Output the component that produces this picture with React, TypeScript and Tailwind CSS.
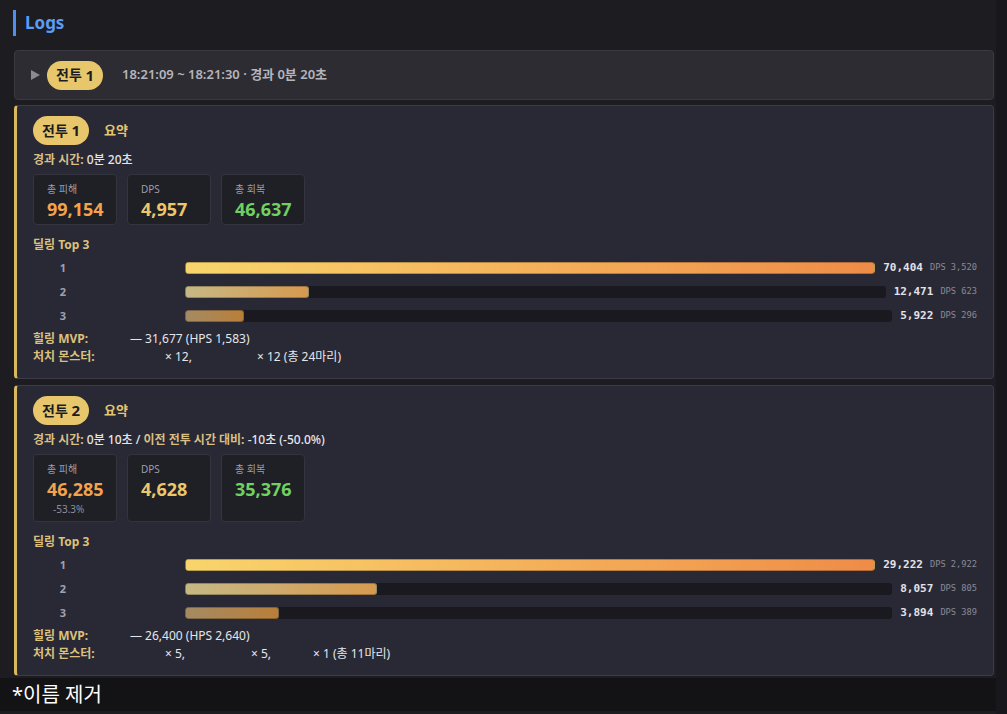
import React from 'react';

const KR = { fontFamily: '"Noto Sans", "Noto Sans CJK KR", sans-serif' };
const MONO = { fontFamily: '"DejaVu Sans Mono", "Liberation Mono", monospace' };

type Stat = { label: string; value: string; color: string; sub?: string };
type Rank = { pct: number; value: string; dps: string; grad: string };

interface Fight {
  no: number;
  timeLine: React.ReactNode;
  stats: Stat[];
  ranks: Rank[];
  mvp: string;
  monsters: { text: string; w?: string }[];
}

const grads = [
  'bg-gradient-to-r from-[#f8d56c] to-[#ee8c48]',
  'bg-gradient-to-r from-[#c6b884] to-[#d69a4f]',
  'bg-gradient-to-r from-[#a48a62] to-[#b97f38]',
];

const fights: Fight[] = [
  {
    no: 1,
    timeLine: (
      <>
        <span className="font-bold text-[#d8bf84]">경과 시간:</span>{' '}
        <span className="font-medium text-[#e6e6ea]">0분 20초</span>
      </>
    ),
    stats: [
      { label: '총 피해', value: '99,154', color: 'text-[#f4a24c]' },
      { label: 'DPS', value: '4,957', color: 'text-[#ecc76a]' },
      { label: '총 회복', value: '46,637', color: 'text-[#6fd160]' },
    ],
    ranks: [
      { pct: 100, value: '70,404', dps: '3,520', grad: grads[0] },
      { pct: 17.7, value: '12,471', dps: '623', grad: grads[1] },
      { pct: 8.4, value: '5,922', dps: '296', grad: grads[2] },
    ],
    mvp: '— 31,677 (HPS 1,583)',
    monsters: [{ text: '× 12,', w: 'w-[92px]' }, { text: '× 12 (총 24마리)' }],
  },
  {
    no: 2,
    timeLine: (
      <>
        <span className="font-bold text-[#d8bf84]">경과 시간:</span>{' '}
        <span className="font-medium text-[#e6e6ea]">0분 10초 / </span>
        <span className="font-bold text-[#d8bf84]">이전 전투 시간 대비:</span>{' '}
        <span className="font-medium text-[#e6e6ea]">-10초 (-50.0%)</span>
      </>
    ),
    stats: [
      { label: '총 피해', value: '46,285', color: 'text-[#f4a24c]', sub: '-53.3%' },
      { label: 'DPS', value: '4,628', color: 'text-[#ecc76a]' },
      { label: '총 회복', value: '35,376', color: 'text-[#6fd160]' },
    ],
    ranks: [
      { pct: 100, value: '29,222', dps: '2,922', grad: grads[0] },
      { pct: 27.2, value: '8,057', dps: '805', grad: grads[1] },
      { pct: 13.3, value: '3,894', dps: '389', grad: grads[2] },
    ],
    mvp: '— 26,400 (HPS 2,640)',
    monsters: [
      { text: '× 5,', w: 'w-[86px]' },
      { text: '× 5,', w: 'w-[62px]' },
      { text: '× 1 (총 11마리)' },
    ],
  },
];

const Pill = ({ no }: { no: number }) => (
  <span className="inline-flex items-center h-[29px] px-[9px] rounded-full bg-[#e8c76c] text-[#1d1c20] text-[14px] font-bold leading-none">
    전투&nbsp;<span className="text-[15px]">{no}</span>
  </span>
);

const FightCard = ({ f }: { f: Fight }) => (
  <div className="bg-[#292935] border border-[#3b3b49] border-l-[3px] border-l-[#d9b960] rounded-[4px] pl-[16px] pr-[16px] pt-[10px] pb-[12px]">
    <div className="flex items-center gap-[15px]">
      <Pill no={f.no} />
      <span className="text-[13px] font-bold text-[#e7c66f]">요약</span>
    </div>
    <div className="mt-[7px] text-[12px] leading-[16px]">{f.timeLine}</div>
    <div className="mt-[6px] flex gap-[10px]">
      {f.stats.map((s) => (
        <div
          key={s.label}
          className="w-[84px] bg-[#1f1f26] border border-[#34343e] rounded-[4px] pl-[13px] pt-[6px] pb-[3px]"
        >
          <div className="text-[10px] leading-[16px] text-[#9d9da8]">{s.label}</div>
          <div className={`text-[18px] leading-[24px] font-bold ${s.color}`}>{s.value}</div>
          {s.sub && <div className="text-[10px] leading-[17px] pl-[6px] text-[#8e8e99]">{s.sub}</div>}
        </div>
      ))}
    </div>
    <div className="mt-[12px] text-[12px] leading-[16px] font-bold text-[#dcc07c]">딜링 Top 3</div>
    <div className="mt-[3px]">
      {f.ranks.map((r, i) => (
        <div key={i} className="flex items-center h-[24px]">
          <span className="w-[60px] text-center text-[11px] font-bold text-[#a0a0ae]">{i + 1}</span>
          <span className="w-[92px]" />
          <div className="flex-1 h-[12px] rounded-[3px] bg-[#19191f] overflow-hidden">
            <div
              className={`h-full rounded-[3px] border border-black/25 ${r.grad}`}
              style={{ width: `${r.pct}%` }}
            />
          </div>
          <span className="ml-[8px] text-[11px] font-bold text-[#e2e2e8]" style={MONO}>
            {r.value}
          </span>
          <span className="ml-[7px] text-[8.7px] text-[#8a8a95]" style={MONO}>
            DPS {r.dps}
          </span>
        </div>
      ))}
    </div>
    <div className="mt-[2px] text-[12px] leading-[18px] text-[#e6e6ea]">
      <div className="flex">
        <span className="w-[97px] font-bold text-[#dcc07c]">힐링 MVP:</span>
        <span>{f.mvp}</span>
      </div>
      <div className="flex">
        <span className="w-[132px] font-bold text-[#dcc07c]">처치 몬스터:</span>
        {f.monsters.map((m, i) => (
          <span key={i} className={m.w ?? ''}>
            {m.text}
          </span>
        ))}
      </div>
    </div>
  </div>
);

export default function App() {
  return (
    <div className="w-[1007px] h-[714px] overflow-hidden bg-[#18171b] flex" style={KR}>
      <div className="w-[996px] flex flex-col bg-[#1d1c21]">
        <div className="pl-[14px] pr-[2px] flex-1">
          <div className="flex items-center h-[44px] pt-[1px]">
            <div className="w-[3px] h-[26px] bg-[#4f8ff0] -ml-[1px]" />
            <span className="ml-[9px] text-[17px] font-bold text-[#5c9cf5]">Logs</span>
          </div>
          <div className="mt-[6px] h-[50px] bg-[#2d2c32] border border-[#3a393f] rounded-[4px] flex items-center pl-[16px]">
            <svg width="9" height="10" viewBox="0 0 9 10" className="mr-[7px]">
              <path d="M0 0 L9 5 L0 10 Z" fill="#8a8a92" />
            </svg>
            <Pill no={1} />
            <span className="ml-[19px] text-[13px] font-semibold text-[#b5b5bd]">
              18:21:09 ~ 18:21:30 · 경과 0분 20초
            </span>
          </div>
          <div className="mt-[5px] flex flex-col gap-[6px]">
            {fights.map((f) => (
              <FightCard key={f.no} f={f} />
            ))}
          </div>
        </div>
        <div className="h-[33px] bg-[#131315] flex items-center pl-[12px] text-[20px] text-white">
          *이름 제거
        </div>
        <div className="h-[3px] bg-[#1d1c21]" />
      </div>
    </div>
  );
}
